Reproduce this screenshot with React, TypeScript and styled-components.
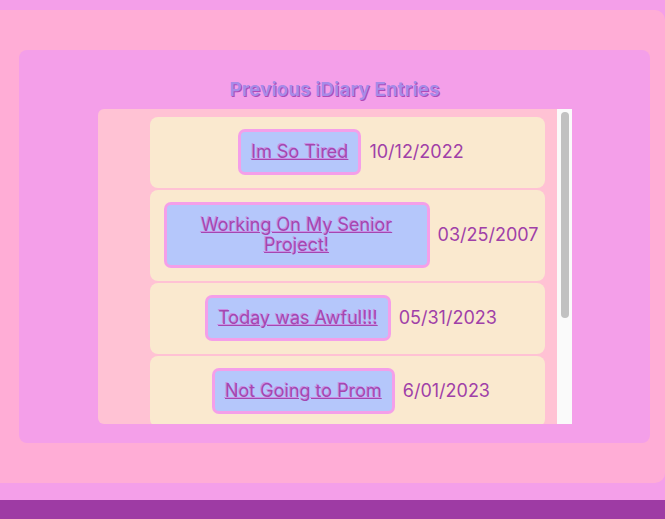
import React from "react";
import styled, { createGlobalStyle } from "styled-components";

const GlobalStyle = createGlobalStyle`
  html, body {
    margin: 0;
    padding: 0;
    background: #f49fe9;
    font-family: Inter, "Noto Sans", "Liberation Sans", sans-serif;
  }
  * { box-sizing: border-box; }
`;

const Page = styled.div`
  padding-top: 10px;
  overflow: hidden;
`;

const Outer = styled.main`
  background: #ffadd6;
  border-radius: 0 10px 10px 0;
  padding: 40px 15px 40px 19px;
`;

const Panel = styled.section`
  background: #f49fe9;
  border-radius: 8px;
  padding: 29px 0 19px;
  display: flex;
  flex-direction: column;
  align-items: center;
`;

const Title = styled.h2`
  margin: 0 0 8px;
  font-size: 19px;
  line-height: 22px;
  font-weight: 700;
  color: #a78be8;
  text-shadow: 1px 1px 0 #b04ab8;
`;

const ListFrame = styled.div`
  width: 474px;
  height: 315px;
  display: flex;
  background: #ffc2d4;
  border-radius: 6px 0 0 6px;
`;

const List = styled.ul`
  list-style: none;
  margin: 0;
  flex: 1;
  min-width: 0;
  padding: 8px 12px 0 52px;
  overflow: hidden;
  display: flex;
  flex-direction: column;
  gap: 2px;
`;

const ScrollTrack = styled.div`
  flex: 0 0 15px;
  background: #fafafa;
  padding: 3px 3px 0 4px;
`;

const ScrollThumb = styled.div`
  height: 206px;
  background: #c1c1c1;
  border-radius: 4px;
`;

const Entry = styled.li`
  flex-shrink: 0;
  background: #fae9cf;
  border-radius: 8px;
  padding: 12px 0 13px 8px;
  display: flex;
  align-items: center;
  justify-content: center;
  gap: 8px;
`;

const EntryLink = styled.a`
  display: block;
  max-width: 266px;
  background: #b5c7fb;
  border: 3px solid #f49fe9;
  border-radius: 7px;
  padding: 10px;
  font-size: 18px;
  line-height: 20px;
  text-align: center;
  color: #a447b0;
  text-decoration: underline;
  text-shadow: -1px -1px 0 #c98fe6;
  cursor: pointer;
`;

const EntryDate = styled.span`
  flex-shrink: 0;
  white-space: nowrap;
  font-size: 18px;
  line-height: 22px;
  color: #a040a8;
`;

const Footer = styled.footer`
  margin-top: 17px;
  height: 40px;
  background: #9e3ba4;
`;

const entries = [
  { title: "Im So Tired", date: "10/12/2022" },
  { title: "Working On My Senior Project!", date: "03/25/2007" },
  { title: "Today was Awful!!!", date: "05/31/2023" },
  { title: "Not Going to Prom", date: "6/01/2023" },
];

export default function App() {
  return (
    <>
      <GlobalStyle />
      <Page>
        <Outer>
          <Panel>
            <Title>Previous iDiary Entries</Title>
            <ListFrame>
              <List>
                {entries.map((e) => (
                  <Entry key={e.title}>
                    <EntryLink href="#">{e.title}</EntryLink>
                    <EntryDate>{e.date}</EntryDate>
                  </Entry>
                ))}
              </List>
              <ScrollTrack>
                <ScrollThumb />
              </ScrollTrack>
            </ListFrame>
          </Panel>
        </Outer>
        <Footer />
      </Page>
    </>
  );
}
